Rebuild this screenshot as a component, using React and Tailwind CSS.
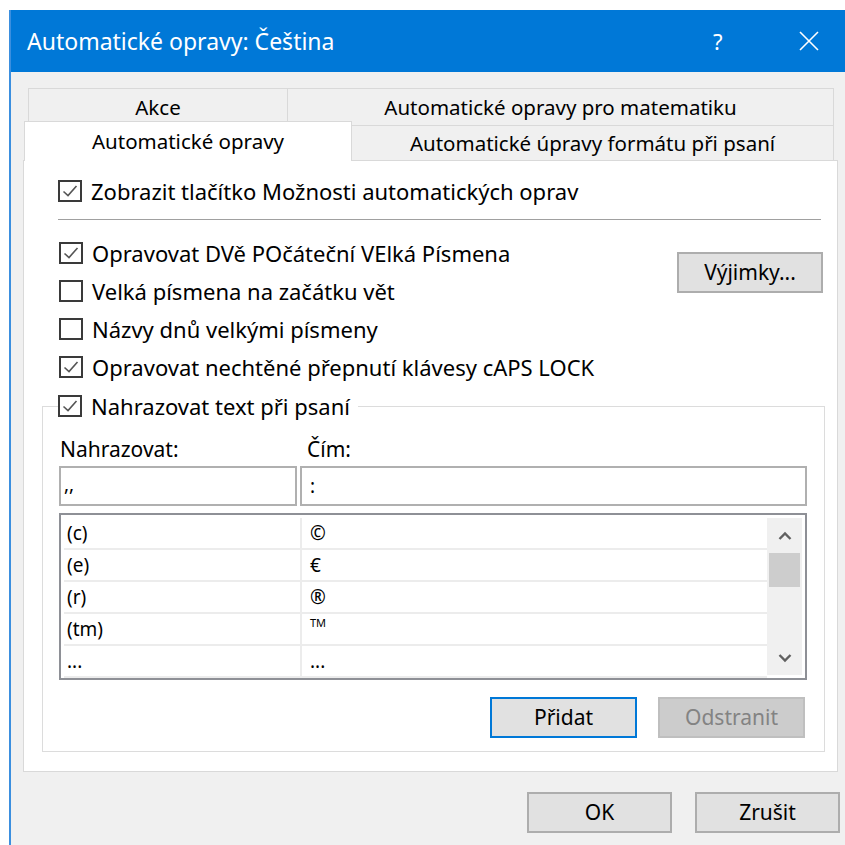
import React from "react";

const font = { fontFamily: '"Noto Sans", "Open Sans", sans-serif' };

const Check = ({ checked }) => (
  <span className="w-[24px] h-[22px] border-2 border-[#3a3a3a] bg-white flex items-center justify-center shrink-0">
    {checked && (
      <svg width="18" height="16" viewBox="0 0 18 16">
        <path d="M2.5 8.5 L7 12.5 L15.5 3" fill="none" stroke="#555" strokeWidth="1.6" />
      </svg>
    )}
  </span>
);

const CheckRow = ({ checked, label }) => (
  <div className="h-[38px] flex items-center gap-[9px]">
    <Check checked={checked} />
    <span>{label}</span>
  </div>
);

const Button = ({ children, variant = "normal", className = "" }) => {
  const styles = {
    normal: "bg-[#e1e1e1] border-2 border-[#adadad] text-black",
    focus: "bg-[#e1e1e1] border-2 border-[#0078d7] text-black",
    disabled: "bg-[#cccccc] border-2 border-[#bfbfbf] text-[#838383]",
  };
  return (
    <button className={`h-[41px] text-[21px] flex items-center justify-center ${styles[variant]} ${className}`}>
      {children}
    </button>
  );
};

const rows = [
  ["(c)", "©"],
  ["(e)", "€"],
  ["(r)", "®"],
  ["(tm)", "™"],
  ["...", "..."],
];

const ScrollBar = () => (
  <div className="w-[35px] bg-[#f0f0f0] flex flex-col items-center">
    <div className="h-[35px] flex items-center justify-center">
      <svg width="14" height="10" viewBox="0 0 14 10">
        <path d="M1.5 8 L7 2.5 L12.5 8" fill="none" stroke="#606060" strokeWidth="2.4" />
      </svg>
    </div>
    <div className="w-[31px] h-[34px] bg-[#cdcdcd]" />
    <div className="flex-1" />
    <div className="h-[35px] flex items-center justify-center">
      <svg width="14" height="10" viewBox="0 0 14 10">
        <path d="M1.5 2 L7 7.5 L12.5 2" fill="none" stroke="#606060" strokeWidth="2.4" />
      </svg>
    </div>
  </div>
);

export default function App() {
  return (
    <div className="w-[845px] h-[845px] bg-white overflow-hidden pt-[10px] pl-[9px] text-[22px] text-black" style={font}>
      <div className="h-[835px] w-[836px] border-l-2 border-[#3b8fdf] bg-[#f0f0f0] flex flex-col">
        {/* title bar */}
        <div className="h-[62px] bg-[#0078d7] text-white flex items-center pl-[16px] shrink-0">
          <span className="text-[23px]">Automatické opravy: Čeština</span>
          <span className="ml-auto text-[22px] w-[20px] mr-[66px]">?</span>
          <svg width="20" height="20" viewBox="0 0 20 20" className="mr-[26px]">
            <path d="M1 1 L19 19 M19 1 L1 19" stroke="white" strokeWidth="1.6" />
          </svg>
        </div>

        <div className="pl-[12px] pt-[16px]">
          {/* tab strip */}
          <div className="flex h-[37px] pl-[5px] text-[20.5px]">
            <div className="w-[260px] border border-b-0 border-[#d9d9d9] flex items-center justify-center">Akce</div>
            <div className="w-[546px] border border-b-0 border-l-0 border-[#d9d9d9] flex items-center justify-center">
              Automatické opravy pro matematiku
            </div>
          </div>
          <div className="flex items-end h-[35px] pl-[1px] text-[20.5px]">
            <div className="relative z-10 -mt-[4px] -mb-px w-[328px] h-[40px] bg-white border border-b-0 border-[#d9d9d9] flex items-center justify-center">
              Automatické opravy
            </div>
            <div className="w-[482px] h-[35px] border border-l-0 border-[#d9d9d9] border-b-0 flex items-center justify-center">
              Automatické úpravy formátu při psaní
            </div>
          </div>

          {/* tab page */}
          <div className="w-[815px] bg-white border border-[#d9d9d9] pl-[34px] pr-[14px] pt-[11px] pb-[19px]">
            <CheckRow checked label="Zobrazit tlačítko Možnosti automatických oprav" />
            <div className="mt-[9px] mr-[2px] h-px bg-[#a0a0a0]" />

            <div className="mt-[14px] flex">
              <div className="flex-1 pl-px">
                <CheckRow checked label="Opravovat DVě POčáteční VElká Písmena" />
                <CheckRow label="Velká písmena na začátku vět" />
                <CheckRow label="Názvy dnů velkými písmeny" />
                <CheckRow checked label="Opravovat nechtěné přepnutí klávesy cAPS LOCK" />
              </div>
              <Button className="mt-[18px] w-[146px]">Výjimky...</Button>
            </div>

            <fieldset className="mt-[9px] -ml-[16px] mr-[-2px] border border-[#dcdcdc] pl-[16px] pr-[17px] pb-[13px]">
              <legend className="pr-[8px] -ml-px">
                <div className="h-[22px] flex items-center gap-[9px]">
                  <Check checked />
                  <span>Nahrazovat text při psaní</span>
                </div>
              </legend>

              <div className="mt-[20px] flex h-[26px] items-center text-[21px]">
                <span className="w-[248px] pl-px">Nahrazovat:</span>
                <span>Čím:</span>
              </div>
              <div className="mt-[3px] flex gap-[3px] text-[19px]">
                <div className="w-[238px] h-[40px] border-2 border-[#b0b0b0] bg-white flex items-end pb-[6px] pl-[3px]">,,</div>
                <div className="flex-1 h-[40px] border-2 border-[#b0b0b0] bg-white flex items-center pl-[8px]">:</div>
              </div>

              {/* replacement list */}
              <div className="mt-[7px] h-[167px] border-2 border-[#8e9096] p-[3px] flex bg-white text-[19px]">
                <div className="flex-1">
                  {rows.map(([from, to], i) => (
                    <div key={i} className="h-[32px] flex border-b-2 border-[#ececec]">
                      <div className="w-[238px] border-r-2 border-[#ececec] pl-[3px] flex items-center">{from}</div>
                      <div className="flex-1 pl-[8px] flex items-center">
                        {to === "™" ? <span className="text-[11px] -mt-[12px]">TM</span> : to}
                      </div>
                    </div>
                  ))}
                </div>
                <ScrollBar />
              </div>

              <div className="mt-[17px] flex justify-end gap-[21px] pr-[2px]">
                <Button variant="focus" className="w-[147px]">Přidat</Button>
                <Button variant="disabled" className="w-[147px]">Odstranit</Button>
              </div>
            </fieldset>
          </div>

          <div className="mt-[20px] flex justify-end gap-[23px] w-[817px]">
            <Button className="w-[145px]">OK</Button>
            <Button className="w-[145px]">Zrušit</Button>
          </div>
        </div>
      </div>
    </div>
  );
}
